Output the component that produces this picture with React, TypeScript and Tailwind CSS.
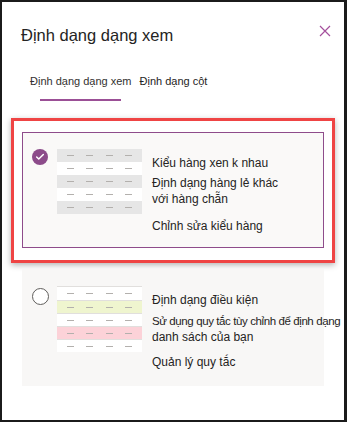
import { Check } from "lucide-react";

const font = { fontFamily: '"Liberation Sans", Arial, sans-serif' };

const Dash = () => <span className="block h-px w-[7px] bg-[#b3b0ad]" />;

const Row = ({ className }: { className: string }) => (
  <div className={`flex h-[13px] shrink-0 items-center justify-around px-[4px] ${className}`}>
    <Dash />
    <Dash />
    <Dash />
    <Dash />
  </div>
);

const App = () => {
  return (
    <div
      style={font}
      className="h-[422px] w-[347px] overflow-hidden border-[2px] border-r-[3px] border-[#1b1b1b] bg-white text-[#252423]"
    >
      <div className="flex items-start justify-between pl-[19px] pr-[13px] pt-[21px]">
        <h1 className="text-[16.5px] leading-6">Định dạng dạng xem</h1>
        <button className="mt-[2px] text-[#a4509c]" aria-label="Đóng">
          <svg width="12" height="12" viewBox="0 0 12 12" fill="none" stroke="currentColor" strokeWidth="1.2">
            <path d="M1 1l10 10M11 1L1 11" />
          </svg>
        </button>
      </div>

      <div className="mt-[26px] flex pl-[26px] text-[11px] leading-4">
        <div className="flex flex-col items-center">
          <span className="px-[2px] pb-[10px] text-[#323130]">Định dạng dạng xem</span>
          <span className="h-[2px] w-[81px] bg-[#9b4f96]" />
        </div>
        <span className="ml-[6px] text-[#252423]">Định dạng cột</span>
      </div>

      <div className="mx-[9px] mt-[17px] border-[3px] border-[#ef4444] px-[8px] pb-[12px] pt-[11px] shadow-[0_2px_6px_rgba(0,0,0,0.3)]">
        <div className="flex h-[116px] border border-[#8e4c8b] bg-[#faf9f8] pl-[9px] pt-[16px]">
          <span className="flex h-[16px] w-[16px] shrink-0 items-center justify-center rounded-full bg-[#8c4b8a] text-white">
            <Check size={10} strokeWidth={3.5} />
          </span>
          <div className="ml-[9px] flex h-[65px] w-[85px] shrink-0 flex-col">
            <Row className="bg-[#e6e6e6]" />
            <Row className="bg-white" />
            <Row className="bg-[#e6e6e6]" />
            <Row className="bg-white" />
            <Row className="bg-[#e6e6e6]" />
          </div>
          <div className="ml-[10px] pt-[6px] text-[12px] leading-4">
            <p>Kiểu hàng xen k nhau</p>
            <p className="mt-[4px]">
              Định dạng hàng lẻ khác
              <br />
              với hàng chẵn
            </p>
            <p className="mt-[11px]">Chỉnh sửa kiểu hàng</p>
          </div>
        </div>
      </div>

      <div className="mx-[20px] mt-[6px] flex h-[117px] bg-[#f8f7f6] pl-[10px] pt-[19px]">
        <span className="block h-[17px] w-[17px] shrink-0 rounded-full border border-[#605e5c] bg-white" />
        <div className="-mt-[2px] ml-[8px] flex h-[65px] w-[85px] shrink-0 flex-col border-b-2 border-t border-[#e1dfdd]">
          <Row className="bg-white" />
          <Row className="border-t border-[#e1dfdd] bg-[#eff5cf]" />
          <Row className="border-t border-[#e1dfdd] bg-white" />
          <Row className="border-t border-[#e1dfdd] bg-[#fcd2d8]" />
          <Row className="border-t border-[#e1dfdd] bg-white" />
        </div>
        <div className="ml-[10px] pt-[4px] text-[12px] leading-4">
          <p>Định dạng điều kiện</p>
          <p className="mt-[5px] whitespace-nowrap">
            <span className="text-[11.5px] tracking-[-0.4px]">Sử dụng quy tắc tùy chỉnh để định dạng</span>
            <br />
            danh sách của bạn
          </p>
          <p className="mt-[9px]">Quản lý quy tắc</p>
        </div>
      </div>
    </div>
  );
};

export default App;
